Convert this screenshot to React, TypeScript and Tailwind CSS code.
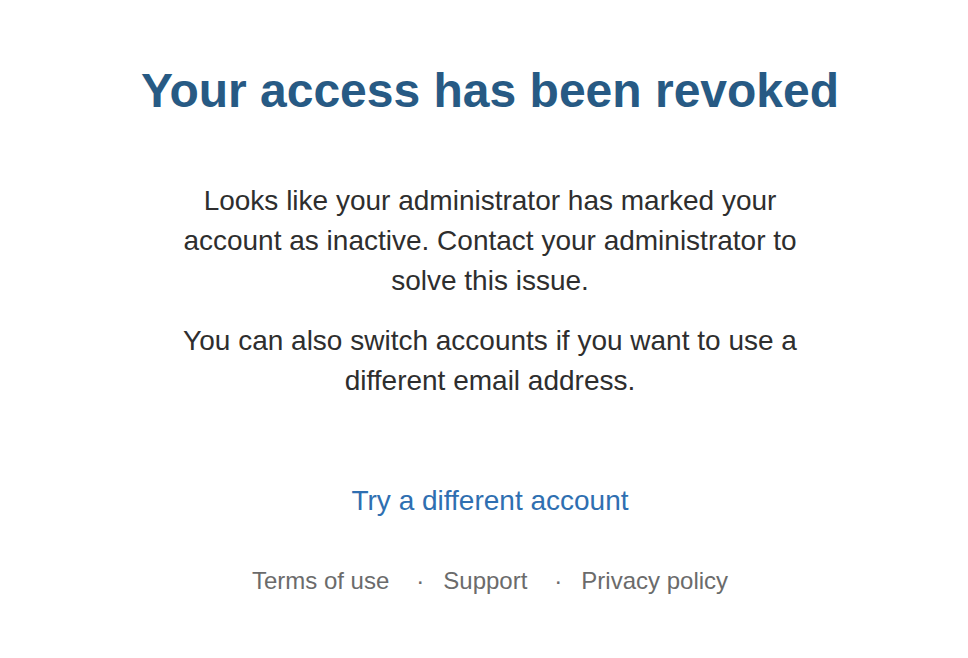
export default function App() {
  return (
    <div className="min-h-screen bg-white flex flex-col items-center pl-[12px] font-['Liberation_Sans',Arial,sans-serif]">
      <h1 className="mt-[63px] text-[48px] leading-[56px] font-bold text-[#275a84]">
        Your access has been revoked
      </h1>

      <div className="mt-[62px] w-[650px] text-center text-[28px] leading-[40px] text-[#2e2e2e]">
        <p>
          Looks like your administrator has marked your account as inactive.
          Contact your administrator to solve this issue.
        </p>
        <p className="mt-[20px]">
          You can also switch accounts if you want to use a different email
          address.
        </p>
      </div>

      <a
        href="#"
        className="mt-[80px] text-[28px] leading-[40px] text-[#2f6fb1]"
      >
        Try a different account
      </a>

      <div className="mt-[40px] flex items-center text-[24px] leading-[40px] text-[#6b6b6b]">
        <a href="#">Terms of use</a>
        <span className="ml-[27px] mr-[19px]">·</span>
        <a href="#">Support</a>
        <span className="ml-[27px] mr-[19px]">·</span>
        <a href="#">Privacy policy</a>
      </div>
    </div>
  );
}
